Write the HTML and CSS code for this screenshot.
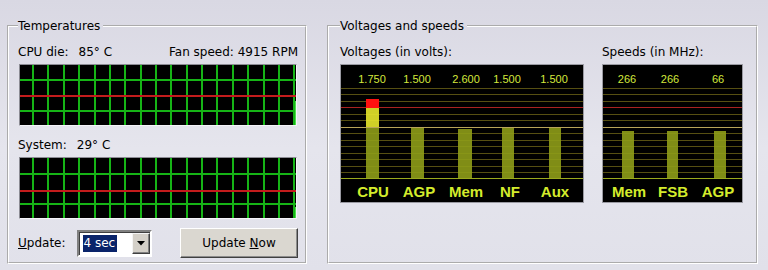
FILE: index.html
```html
<!DOCTYPE html>
<html lang="en">
<head>
    <meta charset="UTF-8">
    <meta name="viewport" content="width=device-width, initial-scale=1.0">
    <title>Hardware Monitor</title>
    <link rel="stylesheet" href="styles.css">
</head>
<body>
    <div class="window">
        <fieldset class="group temps">
            <legend>Temperatures</legend>
            <div class="reading">
                <span>CPU die:<span class="val">85° C</span></span>
                <span>Fan speed: 4915 RPM</span>
            </div>
            <div class="graph">
                <svg width="276" height="60">
                    <rect width="276" height="60" fill="#000"/>
                    <g fill="#16b416">
                        <rect x="12" width="2" height="60"/>
                        <rect x="27" width="2" height="60"/>
                        <rect x="43" width="2" height="60"/>
                        <rect x="58" width="2" height="60"/>
                        <rect x="74" width="2" height="60"/>
                        <rect x="89" width="2" height="60"/>
                        <rect x="104" width="2" height="60"/>
                        <rect x="120" width="2" height="60"/>
                        <rect x="135" width="2" height="60"/>
                        <rect x="150" width="2" height="60"/>
                        <rect x="166" width="2" height="60"/>
                        <rect x="181" width="2" height="60"/>
                        <rect x="196" width="2" height="60"/>
                        <rect x="212" width="2" height="60"/>
                        <rect x="227" width="2" height="60"/>
                        <rect x="243" width="2" height="60"/>
                        <rect x="258" width="2" height="60"/>
                        <rect x="273" width="2" height="60"/>
                        <rect y="14" width="276" height="2"/>
                        <rect y="45" width="276" height="2"/>
                    </g>
                    <rect y="30" width="276" height="2" fill="#c41c1c"/>
                    <rect x="275" y="36" width="1" height="24" fill="#4ce04c"/>
                </svg>
            </div>
            <div class="reading system">
                <span>System:<span class="val">29° C</span></span>
            </div>
            <div class="graph">
                <svg width="276" height="60">
                    <rect width="276" height="60" fill="#000"/>
                    <g fill="#16b416">
                        <rect x="12" width="2" height="60"/>
                        <rect x="27" width="2" height="60"/>
                        <rect x="43" width="2" height="60"/>
                        <rect x="58" width="2" height="60"/>
                        <rect x="74" width="2" height="60"/>
                        <rect x="89" width="2" height="60"/>
                        <rect x="104" width="2" height="60"/>
                        <rect x="120" width="2" height="60"/>
                        <rect x="135" width="2" height="60"/>
                        <rect x="150" width="2" height="60"/>
                        <rect x="166" width="2" height="60"/>
                        <rect x="181" width="2" height="60"/>
                        <rect x="196" width="2" height="60"/>
                        <rect x="212" width="2" height="60"/>
                        <rect x="227" width="2" height="60"/>
                        <rect x="243" width="2" height="60"/>
                        <rect x="258" width="2" height="60"/>
                        <rect x="273" width="2" height="60"/>
                        <rect y="15" width="276" height="2"/>
                        <rect y="45" width="276" height="2"/>
                    </g>
                    <rect y="32" width="276" height="2" fill="#c41c1c"/>
                    <rect x="275" y="49" width="1" height="11" fill="#4ce04c"/>
                </svg>
            </div>
            <div class="controls">
                <label class="update-label"><u>U</u>pdate:</label>
                <div class="combo">
                    <span class="sel">4 sec</span>
                    <span class="drop">
                        <svg width="8" height="5" viewBox="0 0 8 5"><path d="M0 0h8L4 4.5z" fill="#000"/></svg>
                    </span>
                </div>
                <button class="btn">Update <u>N</u>ow</button>
            </div>
        </fieldset>

        <fieldset class="group speeds">
            <legend>Voltages and speeds</legend>
            <div class="meters">
                <div class="meter">
                    <div class="caption">Voltages (in volts):</div>
                    <svg class="panel" width="244" height="139">
                        <rect width="244" height="139" fill="#000"/>
                        <g stroke="#564f12">
                            <line x1="1" x2="243" y1="24.5" y2="24.5"/>
                            <line x1="1" x2="243" y1="30.5" y2="30.5"/>
                            <line x1="1" x2="243" y1="37.5" y2="37.5"/>
                            <line x1="1" x2="243" y1="50.5" y2="50.5"/>
                            <line x1="1" x2="243" y1="56.5" y2="56.5"/>
                            <line x1="1" x2="243" y1="69.5" y2="69.5"/>
                            <line x1="1" x2="243" y1="76.5" y2="76.5"/>
                            <line x1="1" x2="243" y1="82.5" y2="82.5"/>
                            <line x1="1" x2="243" y1="89.5" y2="89.5"/>
                            <line x1="1" x2="243" y1="95.5" y2="95.5"/>
                            <line x1="1" x2="243" y1="102.5" y2="102.5"/>
                            <line x1="1" x2="243" y1="108.5" y2="108.5"/>
                        </g>
                        <line x1="1" x2="243" y1="43.5" y2="43.5" stroke="#a82222"/>
                        <g class="bar">
                            <rect x="26" y="63" width="13" height="51"/>
                            <rect x="71" y="63" width="13" height="51"/>
                            <rect x="118" y="65" width="14" height="49"/>
                            <rect x="162" y="63" width="12" height="51"/>
                            <rect x="209" y="63" width="12" height="51"/>
                        </g>
                        <rect x="26" y="44" width="13" height="19" fill="#e2e22a" opacity="0.92"/>
                        <rect x="26" y="35" width="13" height="9" fill="#ff1010"/>
                        <line x1="1" x2="243" y1="63.5" y2="63.5" stroke="#b8a458"/>
                        <line x1="1" x2="243" y1="114.5" y2="114.5" stroke="#9aaa1e"/>
                        <text class="num" x="32" y="19">1.750</text>
                        <text class="num" x="77" y="19">1.500</text>
                        <text class="num" x="126" y="19">2.600</text>
                        <text class="num" x="167" y="19">1.500</text>
                        <text class="num" x="214" y="19">1.500</text>
                        <text class="tag" x="33" y="133">CPU</text>
                        <text class="tag" x="79" y="133">AGP</text>
                        <text class="tag" x="126" y="133">Mem</text>
                        <text class="tag" x="170" y="133">NF</text>
                        <text class="tag" x="215" y="133">Aux</text>
                        <rect class="frame" x="0.5" y="0.5" width="243" height="138"/>
                    </svg>
                </div>
                <div class="meter">
                    <div class="caption">Speeds (in MHz):</div>
                    <svg class="panel" width="141" height="139">
                        <rect width="141" height="139" fill="#000"/>
                        <g stroke="#564f12">
                            <line x1="1" x2="140" y1="24.5" y2="24.5"/>
                            <line x1="1" x2="140" y1="30.5" y2="30.5"/>
                            <line x1="1" x2="140" y1="37.5" y2="37.5"/>
                            <line x1="1" x2="140" y1="50.5" y2="50.5"/>
                            <line x1="1" x2="140" y1="56.5" y2="56.5"/>
                            <line x1="1" x2="140" y1="69.5" y2="69.5"/>
                            <line x1="1" x2="140" y1="76.5" y2="76.5"/>
                            <line x1="1" x2="140" y1="82.5" y2="82.5"/>
                            <line x1="1" x2="140" y1="89.5" y2="89.5"/>
                            <line x1="1" x2="140" y1="95.5" y2="95.5"/>
                            <line x1="1" x2="140" y1="102.5" y2="102.5"/>
                            <line x1="1" x2="140" y1="108.5" y2="108.5"/>
                        </g>
                        <line x1="1" x2="140" y1="43.5" y2="43.5" stroke="#a82222"/>
                        <g class="bar">
                            <rect x="20" y="67" width="12" height="47"/>
                            <rect x="65" y="67" width="11" height="47"/>
                            <rect x="112" y="67" width="12" height="47"/>
                        </g>
                        <line x1="1" x2="140" y1="63.5" y2="63.5" stroke="#b8a458"/>
                        <line x1="1" x2="140" y1="114.5" y2="114.5" stroke="#9aaa1e"/>
                        <text class="num" x="25" y="19">266</text>
                        <text class="num" x="68" y="19">266</text>
                        <text class="num" x="116" y="19">66</text>
                        <text class="tag" x="27" y="133">Mem</text>
                        <text class="tag" x="71" y="133">FSB</text>
                        <text class="tag" x="116" y="133">AGP</text>
                        <rect class="frame" x="0.5" y="0.5" width="140" height="138"/>
                    </svg>
                </div>
            </div>
        </fieldset>
    </div>
</body>
</html>
```

FILE: styles.css
```css
html, body {
    margin: 0;
    padding: 0;
    height: 270px;
    overflow: hidden;
}

body {
    font-family: "DejaVu Sans", Verdana, sans-serif;
    font-size: 12px;
    color: #000;
    background: linear-gradient(to bottom, #d9d8e3 0%, #e5e5ed 55%, #e1e1ea 100%);
}

.window {
    display: flex;
    gap: 20px;
    padding: 18px 0 0 7px;
}

.group {
    margin: 0;
    border: 2px groove #fff;
    box-sizing: border-box;
    padding: 11px 7px 4px 9px;
    display: flex;
    flex-direction: column;
}

.group legend {
    padding: 0 3px 0 0;
    line-height: 16px;
}

.temps {
    width: 300px;
}

.speeds {
    width: 431px;
    padding-left: 11px;
}

.reading {
    display: flex;
    justify-content: space-between;
    line-height: 14px;
    height: 14px;
}

.reading .val {
    margin-left: 10px;
}

.system {
    margin-top: 12px;
}

.graph {
    margin: 5px 0 0 1px;
    width: 276px;
    height: 60px;
    border: 1px solid;
    border-color: #8c8c94 #f4f4f8 #f4f4f8 #8c8c94;
}

.graph svg {
    display: block;
}

.controls {
    display: flex;
    align-items: center;
    margin-top: 9px;
    height: 30px;
}

.update-label {
    line-height: 14px;
}

.combo {
    margin-left: 11px;
    width: 75px;
    height: 27px;
    box-sizing: border-box;
    border: 2px solid;
    border-color: #808080 #fff #fff #808080;
    box-shadow: inset 1px 1px 0 #404040;
    background: #fff;
    display: flex;
    align-items: center;
    justify-content: space-between;
    padding: 1px 0 1px 4px;
}

.sel {
    background: #0a246a;
    color: #fff;
    line-height: 17px;
    padding: 0 2px 0 1px;
}

.drop {
    width: 18px;
    height: 21px;
    box-sizing: border-box;
    background: #d4d0c8;
    border: 1px solid;
    border-color: #f4f4f4 #404040 #404040 #f4f4f4;
    box-shadow: inset -1px -1px 0 #808080;
    display: flex;
    align-items: center;
    justify-content: center;
}

.drop svg {
    display: block;
}

.btn {
    margin-left: auto;
    width: 118px;
    height: 30px;
    font-family: "DejaVu Sans", Verdana, sans-serif;
    font-size: 12px;
    color: #000;
    background: #dad7d0;
    border: 1px solid;
    border-color: #fff #404040 #404040 #fff;
    box-shadow: inset -1px -1px 0 #8c8c8c;
    padding: 0;
}

.meters {
    display: flex;
    gap: 18px;
}

.caption {
    line-height: 14px;
    height: 14px;
}

.panel {
    display: block;
    margin-top: 5px;
}

.panel .bar rect {
    fill: #8e9c18;
    opacity: 0.9;
}

.panel .frame {
    fill: none;
    stroke: #9a9aa2;
}

.num {
    font-family: "Liberation Sans", Arial, sans-serif;
    font-size: 11px;
    fill: #d4e83c;
    text-anchor: middle;
}

.tag {
    font-family: "Liberation Sans", Arial, sans-serif;
    font-size: 15px;
    font-weight: bold;
    fill: #d4ec2c;
    text-anchor: middle;
}
```
